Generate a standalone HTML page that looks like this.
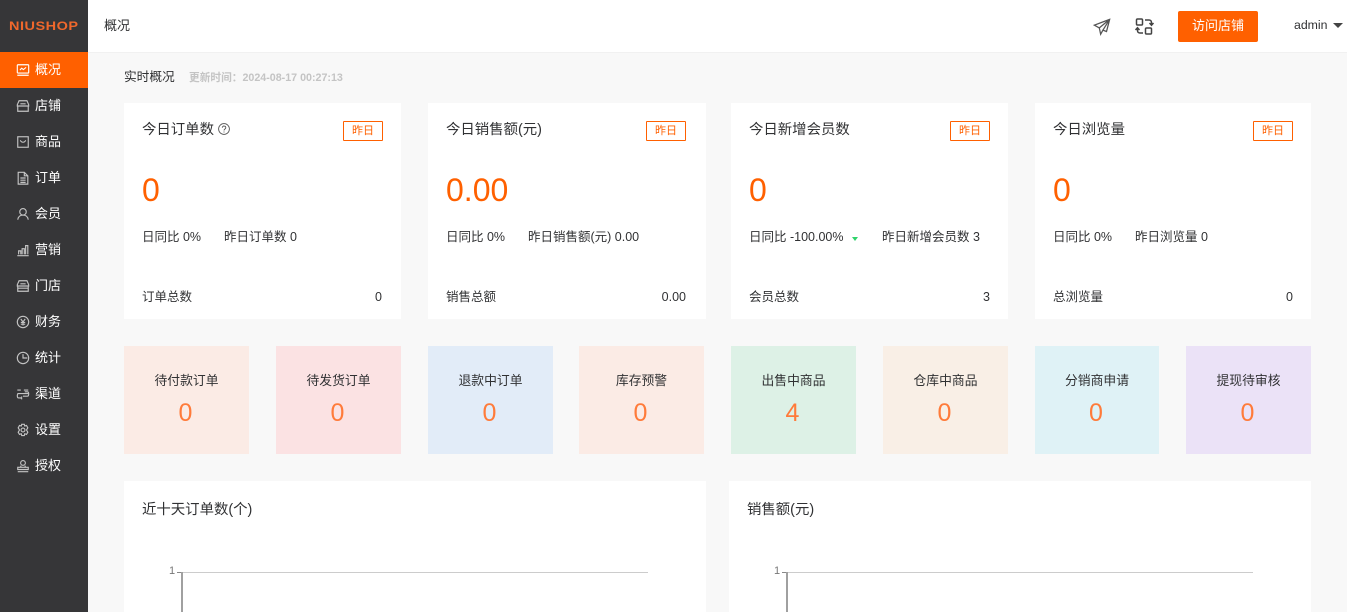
<!DOCTYPE html>
<html lang="zh"><head><meta charset="utf-8"><title>概况</title>
<style>
*{box-sizing:border-box}
html,body{margin:0;padding:0;width:1347px;height:612px;overflow:hidden;background:#f8f8f8}
body{font-family:"Liberation Sans","Noto Sans CJK SC",sans-serif;font-size:14px;color:#303133;position:relative}
.a{position:absolute;white-space:nowrap}
#side{position:absolute;left:0;top:0;width:88px;height:612px;background:#363638}
#logo{position:absolute;left:9px;top:20px;color:#f0682c;font-size:11.5px;line-height:14px;font-weight:bold;letter-spacing:.4px;transform:scaleX(1.26);transform-origin:left}
.m{position:absolute;left:0;width:88px;height:36px;color:#fff;font-size:13px;line-height:36px;padding-left:35px}
.m svg{position:absolute;left:16px;top:11px;width:14px;height:14px;fill:none;stroke:#c4c4c4;stroke-width:1.3}
.m.on{background:#ff6000;top:52px}
.m.on svg{stroke:#fff}
#top{position:absolute;left:88px;top:0;width:1259px;height:53px;background:#fff;border-bottom:1px solid #f1f1f1}
.card{position:absolute;top:103px;width:277px;height:216px;background:#fff}
.t{position:absolute;left:18px;top:18px;font-size:14.4px;line-height:18px;color:#303133;white-space:nowrap}
.y{position:absolute;right:18px;top:18px;width:40px;height:20px;border:1px solid #ff6000;border-radius:1px;color:#ff6000;font-size:11px;line-height:18px;text-align:center}
.n{position:absolute;left:18px;top:67px;font-size:32px;line-height:40px;color:#ff6000}
.s{position:absolute;top:125px;font-size:12.5px;line-height:18px;white-space:nowrap;color:#303133}
.b{position:absolute;top:185px;font-size:12.5px;line-height:18px;white-space:nowrap;color:#303133}
.tile{position:absolute;top:346px;height:108px;text-align:center}
.tile div{position:absolute;left:-1px;width:100%}
.tile .l{top:26px;left:0;font-size:12.8px;line-height:18px;color:#303133}
.tile .v{top:52px;font-size:25px;line-height:30px;color:#ff7b3a}
.chart{position:absolute;top:481px;height:131px;background:#fff}
</style></head><body>
<div id="side">
<div id="logo">NIUSHOP</div>
<div class="m on"><svg viewBox="0 0 16 16"><rect x="1.500" y="2" width="13" height="9.500" rx=".8"/><path d="M1.500 14h13M4.500 8l2-2 2 1.500 3-2.500"/></svg>概况</div>
<div class="m" style="top:88px"><svg viewBox="0 0 16 16"><path d="M3.500 2h9l2 4.500v1.500h-13V6.500zM2 8v6h12V8M5 5.500h6"/></svg>店铺</div>
<div class="m" style="top:124px"><svg viewBox="0 0 16 16"><rect x="2" y="2" width="12" height="12"/><path d="M5 6c1 3 5 3 6 0"/></svg>商品</div>
<div class="m" style="top:160px"><svg viewBox="0 0 16 16"><path d="M2.500 1.500h7l4 4v9.500h-11zM9.500 1.500v4h4M5 8h6M5 10.500h6M5 13h6"/></svg>订单</div>
<div class="m" style="top:196px"><svg viewBox="0 0 16 16"><circle cx="8" cy="5.500" r="3.700"/><path d="M2 14.500c.5-3.500 3-5.300 6-5.300s5.500 1.800 6 5.300"/></svg>会员</div>
<div class="m" style="top:232px"><svg viewBox="0 0 16 16"><path d="M1.500 14.500h13M3 13v-4h2.500v4M7 13V6.500h2.500V13M11 13V3h2.500v10"/></svg>营销</div>
<div class="m" style="top:268px"><svg viewBox="0 0 16 16"><path d="M3.500 2h9l2 4.500v1.500h-13V6.500zM2 8v6h12V8M2 10.500h12M5 5.500h6"/></svg>门店</div>
<div class="m" style="top:304px"><svg viewBox="0 0 16 16"><circle cx="8" cy="8" r="6.500"/><path d="M5.500 4.500L8 8l2.500-3.500M8 8v4M5.500 8.500h5M5.500 10.500h5"/></svg>财务</div>
<div class="m" style="top:340px"><svg viewBox="0 0 16 16"><circle cx="8" cy="8" r="6.500"/><path d="M8 3.500V8h5"/></svg>统计</div>
<div class="m" style="top:376px"><svg viewBox="0 0 16 16"><path d="M1.500 3.500h4M1.500 7.500h13M3 7.500c-2 0-2 5 0 5h3M10 5.500h3c2 0 2 5 0 5H8M7 11l-1.500 1.500L7 14M9 3.500h5"/></svg>渠道</div>
<div class="m" style="top:412px"><svg viewBox="0 0 16 16"><path d="M6.500 1.500h3l.5 2 2-.7 1.500 2.700L12 8l1.500 2.500L12 13l-2-.7-.5 2h-3l-.5-2-2 .7-1.500-2.500L4 8 2.500 5.500 4 2.800l2 .7z"/><circle cx="8" cy="8" r="2.200"/></svg>设置</div>
<div class="m" style="top:448px"><svg viewBox="0 0 16 16"><circle cx="8" cy="4.500" r="2.700"/><path d="M5.500 7.500v2M10.500 7.500v2M2 9.500h12v2.500H2zM2 14.500h12"/></svg>授权</div>
</div>

<div id="top"></div>
<div class="a" style="left:104px;top:17px;font-size:13px;line-height:18px;color:#303133">概况</div>
<svg class="a" style="left:1093px;top:18px" width="18" height="18" viewBox="0 0 20 20" fill="none" stroke="#555" stroke-width="1.400"><path d="M18.500 1.500L1.500 8l5.500 3 1.500 7 2.500-4.500 4 1.500zM18.500 1.500L7 11M18.500 1.500l-7.500 12-2.500 4.500"/></svg>
<svg class="a" style="left:1135px;top:17px" width="20" height="20" viewBox="0 0 20 20" fill="none" stroke="#444" stroke-width="1.500"><rect x="1.500" y="2" width="6" height="6" rx="1"/><rect x="10.500" y="11" width="6" height="6" rx="1"/><path d="M10 3h4c1.500 0 2.500 1 2.500 2.500V8M14.500 6l2 2.200 2-2.200M8 16H5c-1.500 0-2.500-1-2.500-2.500V11M.5 13l2-2.200 2 2.200"/></svg>
<div class="a" style="left:1178px;top:11px;width:80px;height:31px;background:#ff6000;border-radius:2px;color:#fff;font-size:13px;line-height:29px;text-align:center">访问店铺</div>
<div class="a" style="left:1294px;top:16px;font-size:12.300px;line-height:18px;color:#303133">admin</div>
<div class="a" style="left:1333px;top:23px;width:0;height:0;border-left:5px solid transparent;border-right:5px solid transparent;border-top:5px solid #444"></div>

<div class="a" style="left:124px;top:68px;font-size:12.700px;line-height:18px;color:#303133">实时概况</div>
<div class="a" style="left:189px;top:69px;font-size:10.700px;line-height:18px;font-weight:bold;color:#c4c4c4">更新时间：2024-08-17 00:27:13</div>

<div class="card" style="left:124px">
<div class="t">今日订单数</div>
<svg class="a" style="left:94px;top:20px" width="12" height="12" viewBox="0 0 12 12" fill="none" stroke="#555" stroke-width=".9"><circle cx="6" cy="6" r="5.400"/><path d="M4.300 4.700c0-2.300 3.500-2.200 3.500 0 0 1.300-1.800 1.300-1.800 2.800M6 8.500v1"/></svg>
<div class="y">昨日</div><div class="n">0</div>
<div class="s" style="left:18px">日同比 0%</div><div class="s" style="left:100px">昨日订单数 0</div>
<div class="b" style="left:18px">订单总数</div><div class="b" style="right:19px">0</div>
</div>
<div class="card" style="left:428px;width:278px">
<div class="t">今日销售额(元)</div><div class="y" style="right:20px">昨日</div><div class="n">0.00</div>
<div class="s" style="left:18px">日同比 0%</div><div class="s" style="left:100px">昨日销售额(元) 0.00</div>
<div class="b" style="left:18px">销售总额</div><div class="b" style="right:20px">0.00</div>
</div>
<div class="card" style="left:731px">
<div class="t">今日新增会员数</div><div class="y">昨日</div><div class="n">0</div>
<div class="s" style="left:18px">日同比 -100.00%</div>
<div class="a" style="left:121px;top:134px;width:0;height:0;border-left:3px solid transparent;border-right:3px solid transparent;border-top:4px solid #2fd36b"></div>
<div class="s" style="left:151px">昨日新增会员数 3</div>
<div class="b" style="left:18px">会员总数</div><div class="b" style="right:18px">3</div>
</div>
<div class="card" style="left:1035px;width:276px">
<div class="t">今日浏览量</div><div class="y">昨日</div><div class="n">0</div>
<div class="s" style="left:18px">日同比 0%</div><div class="s" style="left:100px">昨日浏览量 0</div>
<div class="b" style="left:18px">总浏览量</div><div class="b" style="right:18px">0</div>
</div>

<div class="tile" style="left:124px;width:125px;background:#fbebe5"><div class="l">待付款订单</div><div class="v">0</div></div>
<div class="tile" style="left:276px;width:125px;background:#fbe2e3"><div class="l">待发货订单</div><div class="v">0</div></div>
<div class="tile" style="left:428px;width:125px;background:#e2ecf8"><div class="l">退款中订单</div><div class="v">0</div></div>
<div class="tile" style="left:579px;width:125px;background:#fbebe5"><div class="l">库存预警</div><div class="v">0</div></div>
<div class="tile" style="left:731px;width:125px;background:#ddf1e6"><div class="l">出售中商品</div><div class="v">4</div></div>
<div class="tile" style="left:883px;width:125px;background:#f9efe6"><div class="l">仓库中商品</div><div class="v">0</div></div>
<div class="tile" style="left:1035px;width:124px;background:#dff2f6"><div class="l">分销商申请</div><div class="v">0</div></div>
<div class="tile" style="left:1186px;width:125px;background:#ebe2f7"><div class="l">提现待审核</div><div class="v">0</div></div>

<div class="chart" style="left:124px;width:582px">
<div class="t" style="top:20px">近十天订单数(个)</div>
<div class="a" style="left:45px;top:84px;font-size:11px;line-height:12px;color:#777">1</div>
<div class="a" style="left:53px;top:91px;width:471px;height:1px;background:#ccc"></div>
<div class="a" style="left:53px;top:91px;width:4px;height:1px;background:#888"></div>
<div class="a" style="left:57px;top:91px;width:2px;height:40px;background:#a0a0a0"></div>
</div>
<div class="chart" style="left:729px;width:582px">
<div class="t" style="top:20px">销售额(元)</div>
<div class="a" style="left:45px;top:84px;font-size:11px;line-height:12px;color:#777">1</div>
<div class="a" style="left:53px;top:91px;width:471px;height:1px;background:#ccc"></div>
<div class="a" style="left:53px;top:91px;width:4px;height:1px;background:#888"></div>
<div class="a" style="left:57px;top:91px;width:2px;height:40px;background:#a0a0a0"></div>
</div>
</body></html>
